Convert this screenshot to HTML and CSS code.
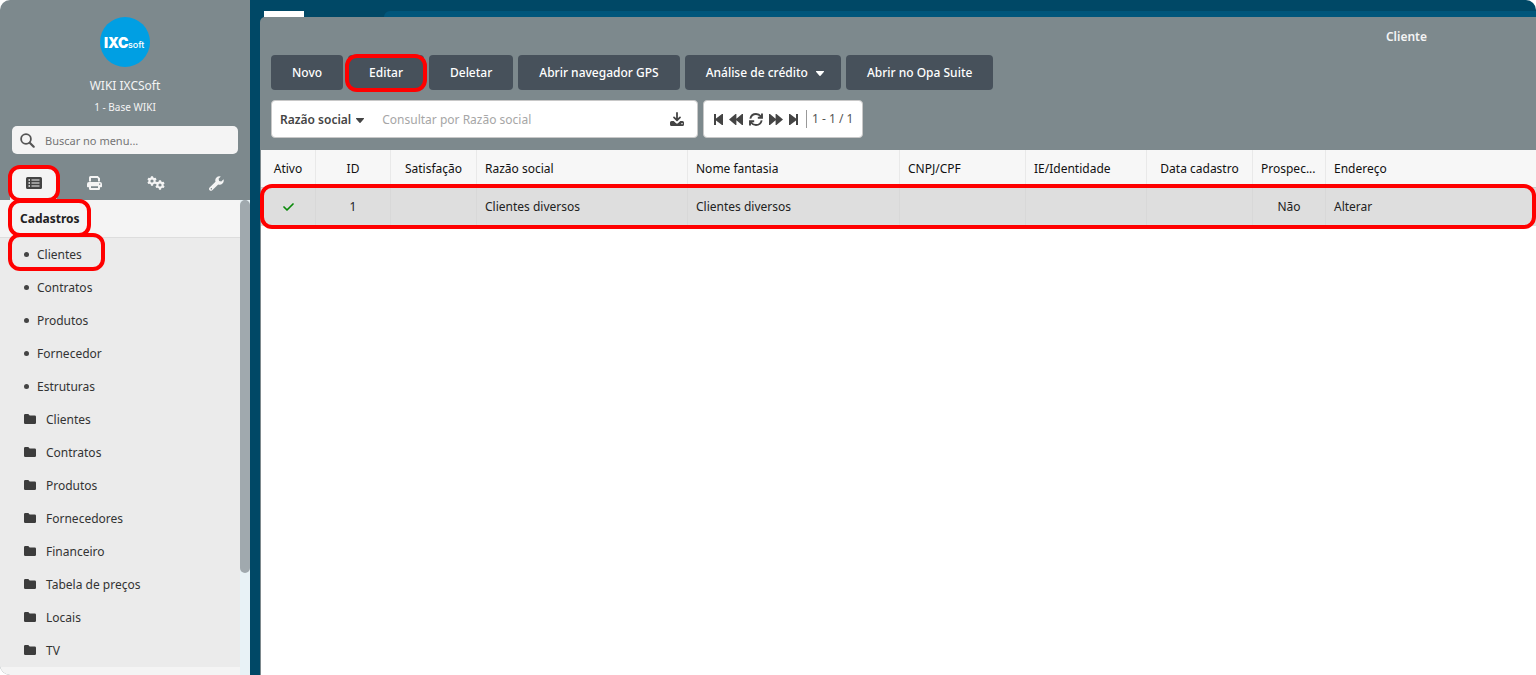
FILE: index.html
```html
<!DOCTYPE html>
<html lang="pt-BR">
<head>
<meta charset="utf-8">
<title>Cliente - IXCSoft</title>
<link rel="stylesheet" href="styles.css">
</head>
<body>
<svg class="defs" aria-hidden="true">
  <symbol id="folder" viewBox="0 0 12 10"><path d="M1.300 0h3l1.400 1.500h5A1.300 1.300 0 0 1 12 2.800v5.900A1.300 1.300 0 0 1 10.700 10H1.300A1.300 1.300 0 0 1 0 8.700V1.300A1.300 1.300 0 0 1 1.300 0z"/></symbol>
  <symbol id="caret" viewBox="0 0 8 5"><path d="M.6 0h6.800a.5.5 0 0 1 .4.900L4.500 4.700a.7.7 0 0 1-1 0L.2.900A.5.5 0 0 1 .6 0z"/></symbol>
  <symbol id="gear" viewBox="0 0 10 10"><path fill-rule="evenodd" d="M4 .2h2l.3 1.300 1 .6 1.300-.4 1 1.700-1 .9v1.200l1 .9-1 1.700-1.300-.4-1 .6L6 9.800H4l-.3-1.500-1-.6-1.300.4-1-1.700 1-.9V4.300l-1-.9 1-1.700 1.300.4 1-.6zM5 3.400a1.600 1.600 0 1 0 0 3.200 1.600 1.600 0 0 0 0-3.200z"/></symbol>
</svg>
<div class="app">
  <aside class="sidebar">
    <div class="profile">
      <svg class="logo" viewBox="0 0 50 50" role="img" aria-label="IXCsoft">
        <circle cx="25" cy="25" r="25"/>
        <text class="logo-main" x="4" y="31">IXC</text>
        <text class="logo-sub" x="28" y="31">soft</text>
      </svg>
      <strong class="company">WIKI IXCSoft</strong>
      <span class="branch">1 - Base WIKI</span>
    </div>
    <label class="menu-search">
      <svg width="15" height="15" viewBox="0 0 15 15" fill="none" stroke="currentColor"><circle cx="6" cy="6" r="4.900" stroke-width="1.800"/><path d="M9.700 9.700l4 4" stroke-width="2.200" stroke-linecap="round"/></svg>
      <input type="text" placeholder="Buscar no menu..." aria-label="Buscar no menu">
    </label>
    <div class="tabs">
      <button class="tab active ring" aria-label="Cadastros">
        <svg width="16" height="12" viewBox="0 0 16 12"><path fill-rule="evenodd" fill="currentColor" d="M1.500 0h13A1.500 1.500 0 0 1 16 1.500v9a1.500 1.500 0 0 1-1.500 1.500h-13A1.500 1.500 0 0 1 0 10.500v-9A1.500 1.500 0 0 1 1.500 0zM2.500 2.300v1.500H4V2.300zm0 3v1.500H4V5.300zm0 3v1.500H4V8.300zM5.500 2.500v1H13.500v-1zm0 3v1H13.500v-1zm0 3v1H13.500v-1z"/></svg>
      </button>
      <button class="tab" aria-label="Relatórios">
        <svg width="15" height="14" viewBox="0 0 15 14"><path fill-rule="evenodd" fill="currentColor" d="M2 5.500V1.500A1.500 1.500 0 0 1 3.500 0h7.300L13 2.200v3.300h-2V2.800L10.200 2H4v3.500zM2 6h11a2 2 0 0 1 2 2v2.500a.8.800 0 0 1-.8.8H13v1.500a1.200 1.200 0 0 1-1.200 1.200H3.200A1.200 1.200 0 0 1 2 12.800v-1.500H.8a.8.800 0 0 1-.8-.8V8a2 2 0 0 1 2-2zm2 4.300V12h7v-1.700zm8-2.900v1.400h1.300V7.400z"/></svg>
      </button>
      <button class="tab" aria-label="Configurações">
        <svg width="18" height="14" viewBox="0 0 18 14" fill="currentColor"><use href="#gear" width="10" height="10"/><use href="#gear" x="8" y="4" width="10" height="10"/></svg>
      </button>
      <button class="tab" aria-label="Ferramentas">
        <svg width="15" height="15" viewBox="0 0 15 15"><path fill-rule="evenodd" fill="currentColor" d="M14.500 3.200 12.300 5.400l-2.200-.5-.5-2.200L11.800.5A4.200 4.200 0 0 0 6.500 5.800L.6 11.500a1.700 1.700 0 0 0 2.700 2.700l5.900-5.700a4.200 4.200 0 0 0 5.300-5.300zM2 12.200a.7.700 0 1 1 0 1.200.7.700 0 0 1 0-1.200z"/></svg>
      </button>
    </div>
    <div class="menu-area">
      <nav class="menu">
        <h2 class="menu-title ring">Cadastros</h2>
        <ul>
          <li><a href="#" class="ring"><i class="dot"></i>Clientes</a></li>
          <li><a href="#"><i class="dot"></i>Contratos</a></li>
          <li><a href="#"><i class="dot"></i>Produtos</a></li>
          <li><a href="#"><i class="dot"></i>Fornecedor</a></li>
          <li><a href="#"><i class="dot"></i>Estruturas</a></li>
          <li><a href="#"><svg class="folder"><use href="#folder"/></svg>Clientes</a></li>
          <li><a href="#"><svg class="folder"><use href="#folder"/></svg>Contratos</a></li>
          <li><a href="#"><svg class="folder"><use href="#folder"/></svg>Produtos</a></li>
          <li><a href="#"><svg class="folder"><use href="#folder"/></svg>Fornecedores</a></li>
          <li><a href="#"><svg class="folder"><use href="#folder"/></svg>Financeiro</a></li>
          <li><a href="#"><svg class="folder"><use href="#folder"/></svg>Tabela de preços</a></li>
          <li><a href="#"><svg class="folder"><use href="#folder"/></svg>Locais</a></li>
          <li><a href="#"><svg class="folder"><use href="#folder"/></svg>TV</a></li>
        </ul>
      </nav>
      <div class="scroll-track"><div class="scroll-thumb"></div></div>
    </div>
  </aside>
  <div class="desktop">
    <div class="backdrop"><div class="white-tile"></div><div class="strip"></div></div>
    <main class="window">
      <h1 class="window-title">Cliente</h1>
      <div class="actions">
        <button class="btn">Novo</button>
        <button class="btn ring">Editar</button>
        <button class="btn">Deletar</button>
        <button class="btn">Abrir navegador GPS</button>
        <button class="btn">Análise de crédito<svg class="caret"><use href="#caret"/></svg></button>
        <button class="btn">Abrir no Opa Suite</button>
      </div>
      <div class="filters">
        <div class="search-box">
          <button class="field-select">Razão social<svg class="caret"><use href="#caret"/></svg></button>
          <input type="text" placeholder="Consultar por Razão social" aria-label="Consultar por Razão social">
          <button class="icon-btn" aria-label="Exportar"><svg width="14" height="14" viewBox="0 0 14 14"><path d="M7 .9v7M4 5.400l3 3 3-3" fill="none" stroke="currentColor" stroke-width="1.800" stroke-linecap="round" stroke-linejoin="round"/><path fill="currentColor" fill-rule="evenodd" d="M1.500 9h2.200L5.800 10.900a1.800 1.800 0 0 0 2.400 0L10.300 9h2.200A1.500 1.500 0 0 1 14 10.500v2a1.500 1.500 0 0 1-1.500 1.500h-11A1.500 1.500 0 0 1 0 12.500v-2A1.500 1.500 0 0 1 1.500 9zm9.900 2v1.200h1.200V11z"/></svg></button>
        </div>
        <div class="pager">
          <button class="icon-btn" aria-label="Primeira"><svg width="9" height="11" viewBox="0 0 9 11" fill="currentColor"><path d="M0 0h2v4.600L8 0h1v11H8L2 6.400V11H0z"/></svg></button>
          <button class="icon-btn" aria-label="Anterior"><svg width="14" height="11" viewBox="0 0 14 11" fill="currentColor"><path d="M0 5.500 6.500 0H7.400v4.700L13 0h1v11h-1L7.400 6.300V11h-.9z"/></svg></button>
          <button class="icon-btn" aria-label="Atualizar"><svg width="14" height="13" viewBox="0 0 14 13" fill="none" stroke="currentColor" stroke-width="1.900"><path d="M1.300 5.600C2 2.700 4.500 1 7 1c2 0 3.600.8 4.700 2.300L13 4.600M13 .5v4.300H8.800M12.700 7.400C12 10.300 9.500 12 7 12c-2 0-3.600-.8-4.700-2.300L1 8.400M1 12.500V8.200h4.200"/></svg></button>
          <button class="icon-btn" aria-label="Próxima"><svg width="14" height="11" viewBox="0 0 14 11" fill="currentColor"><path d="M14 5.500 7.500 0H6.600v4.700L1 0H0v11h1l5.600-4.700V11h.9z"/></svg></button>
          <button class="icon-btn" aria-label="Última"><svg width="9" height="11" viewBox="0 0 9 11" fill="currentColor"><path d="M9 0H7v4.600L1 0H0v11h1l6-4.600V11h2z"/></svg></button>
          <span class="count">1 - 1 / 1</span>
        </div>
      </div>
      <div class="grid">
        <table>
          <colgroup><col class="c-active"><col class="c-id"><col class="c-sat"><col class="c-name"><col class="c-fantasy"><col class="c-doc"><col class="c-ie"><col class="c-date"><col class="c-prospect"><col></colgroup>
          <thead>
            <tr><th class="mid">Ativo</th><th class="mid">ID</th><th class="mid">Satisfação</th><th>Razão social</th><th>Nome fantasia</th><th>CNPJ/CPF</th><th>IE/Identidade</th><th class="mid">Data cadastro</th><th>Prospec...</th><th>Endereço</th></tr>
          </thead>
          <tbody>
            <tr class="ring-row"><td class="mid"><svg class="check" width="11" height="8" viewBox="0 0 11 8" role="img" aria-label="Sim"><path d="M1 4l3 3 6-6" fill="none" stroke="currentColor" stroke-width="1.700" stroke-linecap="round" stroke-linejoin="round"/></svg></td><td class="mid">1</td><td></td><td>Clientes diversos</td><td>Clientes diversos</td><td></td><td></td><td></td><td class="mid">Não</td><td>Alterar</td></tr>
          </tbody>
        </table>
      </div>
    </main>
  </div>
</div>
</body>
</html>
```

FILE: styles.css
```css
*, *::before, *::after { box-sizing: border-box; }

body {
  margin: 0;
  background: #fff;
  color: #222;
  font: 12px/18px "Noto Sans", "Open Sans", sans-serif;
}

button, input {
  margin: 0;
  padding: 0;
  border: 0;
  background: none;
  color: inherit;
  font: inherit;
}

h1, h2, ul { margin: 0; padding: 0; }
ul { list-style: none; }
svg { display: block; flex: none; }
.defs { position: absolute; width: 0; height: 0; }

.app {
  display: flex;
  height: 100vh;
  overflow: hidden;
  border-radius: 10px 10px 0 10px;
}

/* Red highlight drawn over a control */
.ring, .ring-row { position: relative; }
.ring::after, .ring-row td:first-child::after {
  content: "";
  position: absolute;
  z-index: 2;
  border: 4px solid #f00;
  border-radius: 12px;
  pointer-events: none;
}

/* Sidebar */
.sidebar {
  display: flex;
  flex-direction: column;
  flex: none;
  width: 250px;
  background: #7d898d;
  color: #f4f4f4;
}

.profile {
  display: flex;
  flex-direction: column;
  align-items: center;
  padding: 17px 0 10px;
}

.logo { width: 50px; height: 50px; fill: #009fe3; }
.logo text { fill: #fff; font-family: Inter, sans-serif; }
.logo .logo-main { font-size: 14px; font-weight: 900; }
.logo .logo-sub { font-size: 9px; font-weight: 500; }
.company { margin-top: 10px; font-weight: 400; }
.branch { margin-top: 3px; font-size: 10px; }

.menu-search {
  display: flex;
  align-items: center;
  gap: 10px;
  height: 28px;
  margin: 0 12px;
  padding: 0 8px;
  border-radius: 5px;
  background: #f4f4f4;
  color: #555;
}
.menu-search input { flex: 1; min-width: 0; padding-top: 1px; font-size: 11px; }
.menu-search input::placeholder { color: #757575; }

.tabs { display: flex; padding: 12px 3px 0; }
.tab {
  display: flex;
  flex: 1;
  align-items: center;
  justify-content: center;
  height: 34px;
  margin: 0 7px;
}
.tab.active { border-radius: 10px 10px 0 0; background: #f4f4f4; color: #444; }
.tab.ring::after { inset: -1px -3px -2px -2px; }

.menu-area { display: flex; flex: 1; min-height: 0; background: #f4f4f4; color: #333; }
.menu { flex: 1; }
.menu-title {
  height: 38px;
  padding: 0 20px;
  border-bottom: 1px solid #ddd;
  color: #222;
  font-size: 12px;
  font-weight: 700;
  line-height: 37px;
}
.menu-title.ring::after { top: -1px; left: 8px; width: 83px; height: 38px; }
.menu ul { background: #ebebeb; }
.menu a {
  display: flex;
  align-items: center;
  height: 33px;
  padding: 0 24px;
  color: inherit;
  text-decoration: none;
}
.menu a.ring::after { top: -5px; left: 8px; width: 97px; height: 38px; }
.dot { width: 5px; height: 5px; margin-right: 8px; border-radius: 50%; background: #444; }
.folder { width: 12px; height: 10px; margin: 0 10px 1px 0; fill: #3c3c3c; }

.scroll-track { width: 10px; background: #e8f2f6; }
.scroll-thumb { height: 78.5%; border-radius: 5px; background: #a0a9ae; }

/* Desktop and window */
.desktop {
  display: flex;
  flex: 1;
  flex-direction: column;
  min-width: 0;
  padding: 11px 0 0 10px;
  background: #004866;
}
.backdrop { display: flex; gap: 80px; height: 6px; padding-left: 4px; }
.white-tile { width: 40px; background: #fff; }
.strip { flex: 1; border-radius: 12px 0 0 0; background: #00567b; }

.window {
  display: flex;
  flex: 1;
  flex-direction: column;
  min-width: 0;
  border-radius: 5px 0 0 0;
  background: #7d898d;
}
.window-title {
  padding: 11px 109px 9px 11px;
  color: #f4f4f4;
  font-size: 12px;
  font-weight: 600;
  line-height: 18px;
  text-align: right;
}

.actions { display: flex; gap: 5px; padding: 0 11px; }
.btn {
  display: flex;
  align-items: center;
  height: 35px;
  padding: 0 21px;
  border-radius: 4px;
  background: #47515b;
  color: #fff;
  font-weight: 500;
}
.btn.ring::after { inset: -1px -3px -2px -3px; }
.caret { width: 8px; height: 5px; fill: currentColor; }
.btn .caret { margin: 2px -4px 0 8px; }

.filters { display: flex; gap: 5px; padding: 10px 11px 12px; }
.search-box, .pager {
  display: flex;
  align-items: center;
  height: 38px;
  padding: 0 9px;
  border: 1px solid #c8c8c8;
  border-radius: 4px;
  background: #fff;
  color: #444;
}
.search-box { width: 427px; padding: 0 13px 0 8px; }
.field-select { display: flex; align-items: center; gap: 5px; padding-top: 1px; font-weight: 600; }
.field-select .caret { margin-top: 2px; }
.search-box input { flex: 1; min-width: 0; margin-left: 18px; padding-top: 1px; }
.search-box input::placeholder { color: #a6a6a6; }
.pager { gap: 6px; padding-left: 10px; }
.count { margin-left: 2px; padding-left: 5px; border-left: 1px solid #999; color: #555; }

.grid { flex: 1; margin-left: 1px; background: #fff; }
table { width: 100%; border-collapse: separate; border-spacing: 0; table-layout: fixed; }
th, td {
  height: 38px;
  padding: 0 8px;
  border-left: 1px solid #e9e9e9;
  color: #222;
  font-weight: 400;
  text-align: left;
  white-space: nowrap;
}
th { border-bottom: 1px solid #ccc; background: #f7f7f7; color: #111; }
td { border-color: #d8d8d8; background: #dedede; }
th:first-child, td:first-child { border-left: 0; }
th.mid, td.mid { padding: 0; text-align: center; }
.ring-row td:first-child::after { inset: -4px 0 -3px -1px; }
.check { margin: 0 auto; color: #0a8a0a; }

.c-active { width: 54px; }
.c-id { width: 75px; }
.c-sat { width: 86px; }
.c-name { width: 211px; }
.c-fantasy { width: 212px; }
.c-doc { width: 126px; }
.c-ie { width: 121px; }
.c-date { width: 106px; }
.c-prospect { width: 73px; }
```
